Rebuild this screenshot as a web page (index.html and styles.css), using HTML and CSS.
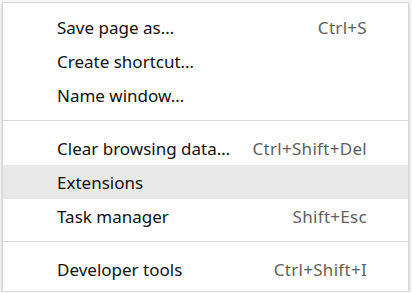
FILE: index.html
```html
<!DOCTYPE html>
<html lang="en">
<head>
    <meta charset="UTF-8">
    <meta name="viewport" content="width=device-width, initial-scale=1.0">
    <title>Menu</title>
    <link rel="stylesheet" href="styles.css">
</head>
<body>
    <div class="menu">
        <div class="item"><span class="label">Save page as…</span><span class="accel">Ctrl+S</span></div>
        <div class="item"><span class="label">Create shortcut…</span></div>
        <div class="item"><span class="label">Name window…</span></div>
        <div class="sep"></div>
        <div class="item"><span class="label">Clear browsing data…</span><span class="accel">Ctrl+Shift+Del</span></div>
        <div class="item active"><span class="label">Extensions</span></div>
        <div class="item"><span class="label">Task manager</span><span class="accel">Shift+Esc</span></div>
        <div class="sep"></div>
        <div class="item"><span class="label">Developer tools</span><span class="accel">Ctrl+Shift+I</span></div>
    </div>
</body>
</html>
```

FILE: styles.css
```css
body {
    margin: 0;
    padding: 2px 0 0 2px;
    background-color: #f7f7f7;
    font-family: "Noto Sans", "Open Sans", sans-serif;
    font-size: 17px;
}
.menu {
    box-sizing: border-box;
    width: 407px;
    background-color: #ffffff;
    border: 1px solid #d9d9d9;
    padding: 7px 0 5px 0;
    box-shadow: 0 2px 2px rgba(0, 0, 0, 0.3);
}
.item {
    display: flex;
    align-items: center;
    justify-content: space-between;
    height: 34px;
    padding: 0 41px 0 54px;
    color: #111111;
}
.item.active {
    background-color: #e8e8e8;
}
.accel {
    color: #5f5f5f;
    letter-spacing: 0.3px;
}
.sep {
    height: 1px;
    background-color: #dadada;
    margin: 8px 0 10px 0;
}
```
